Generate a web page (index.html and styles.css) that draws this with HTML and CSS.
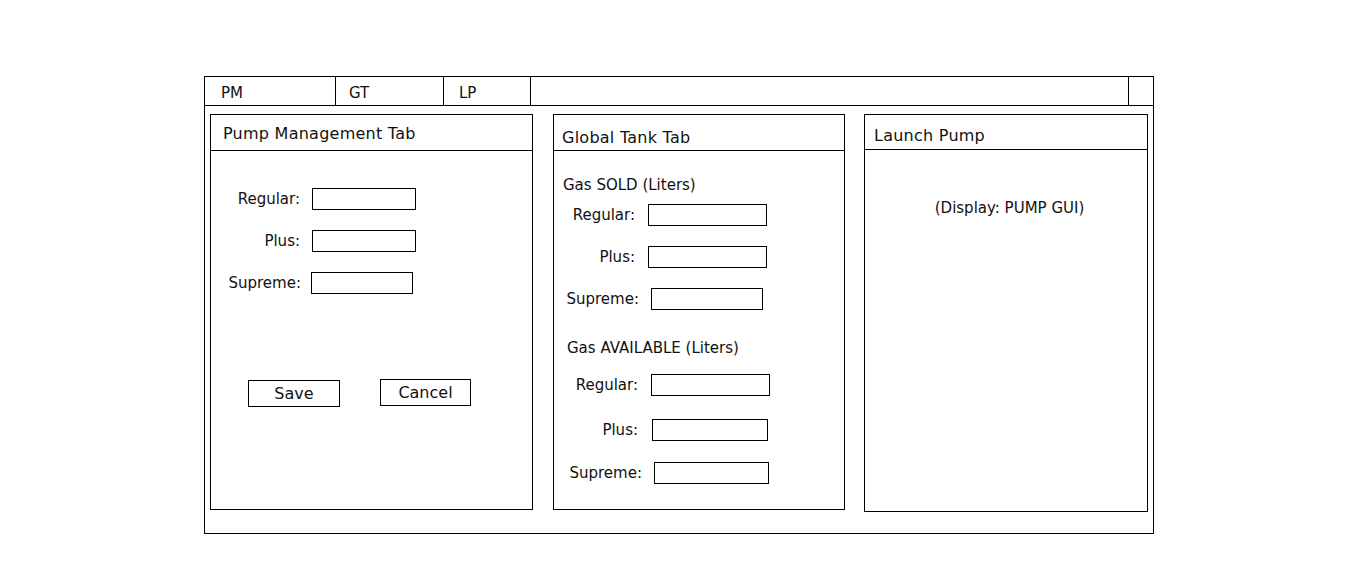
FILE: index.html
```html
<!DOCTYPE html>
<html>
<head>
<meta charset="utf-8">
<title>Pump Management</title>
<link rel="stylesheet" href="styles.css">
</head>
<body>
<div class="frame">
  <div class="tabbar">
    <div class="tab tab-pm">PM</div>
    <div class="tab tab-gt">GT</div>
    <div class="tab tab-lp">LP</div>
    <div class="tab tab-fill"></div>
    <div class="tab tab-end"></div>
  </div>
  <div class="content">
    <section class="panel panel-pm">
      <div class="panel-head head-pm">Pump Management Tab</div>
      <div class="panel-body body-pm">
        <div class="row"><span class="lbl">Regular:</span><span class="field"></span></div>
        <div class="row"><span class="lbl">Plus:</span><span class="field"></span></div>
        <div class="row"><span class="lbl lbl-wide">Supreme:</span><span class="field field-sm"></span></div>
        <div class="buttons">
          <span class="btn btn-save">Save</span>
          <span class="btn btn-cancel">Cancel</span>
        </div>
      </div>
    </section>
    <section class="panel panel-gt">
      <div class="panel-head head-gt">Global Tank Tab</div>
      <div class="panel-body body-gt">
        <div class="group-title gt-sold">Gas SOLD (Liters)</div>
        <div class="row row-gt"><span class="lbl">Regular:</span><span class="field"></span></div>
        <div class="row row-gt"><span class="lbl">Plus:</span><span class="field"></span></div>
        <div class="row row-gt row-shift"><span class="lbl">Supreme:</span><span class="field field-s2"></span></div>
        <div class="group-title gt-avail">Gas AVAILABLE (Liters)</div>
        <div class="row row-gt row-av"><span class="lbl">Regular:</span><span class="field"></span></div>
        <div class="row row-gt row-av row-av2"><span class="lbl">Plus:</span><span class="field field-s3"></span></div>
        <div class="row row-gt row-av row-av3"><span class="lbl">Supreme:</span><span class="field field-s4"></span></div>
      </div>
    </section>
    <section class="panel panel-lp">
      <div class="panel-head head-lp">Launch Pump</div>
      <div class="panel-body body-lp">(Display: PUMP GUI)</div>
    </section>
  </div>
</div>
</body>
</html>
```

FILE: styles.css
```css
html, body {
  margin: 0;
  padding: 0;
  background: #fff;
}
body {
  font-family: "DejaVu Sans", "Liberation Sans", sans-serif;
  font-size: 15px;
  color: #111;
}
.frame {
  box-sizing: border-box;
  margin: 76px 0 0 204px;
  width: 950px;
  height: 458px;
  border: 1px solid #000;
  display: flex;
  flex-direction: column;
}
.tabbar {
  display: flex;
  height: 29px;
  box-sizing: border-box;
  border-bottom: 1px solid #000;
}
.tab {
  box-sizing: border-box;
  border-right: 1px solid #000;
  padding-top: 7px;
  line-height: 18px;
}
.tab-pm { width: 131px; padding-left: 16px; }
.tab-gt { width: 108px; padding-left: 13px; }
.tab-lp { width: 87px; padding-left: 15px; }
.tab-fill { flex: 1; }
.tab-end { width: 24px; border-right: none; }

.content {
  display: flex;
  align-items: flex-start;
  padding: 8px 0 0 5px;
}
.panel {
  box-sizing: border-box;
  border: 1px solid #000;
  display: flex;
  flex-direction: column;
}
.panel-pm { width: 323px; height: 396px; }
.panel-gt { width: 292px; height: 396px; margin-left: 20px; }
.panel-lp { width: 284px; height: 398px; margin-left: 19px; }

.panel-head {
  box-sizing: border-box;
  height: 36px;
  border-bottom: 1px solid #000;
  font-size: 16px;
  line-height: 20px;
  letter-spacing: 0.25px;
}
.head-pm { padding: 9px 0 0 12px; }
.head-gt { padding: 13px 0 0 8px; }
.head-lp { padding: 11px 0 0 9px; height: 35px; }

.row {
  display: flex;
  align-items: center;
  height: 22px;
}
.lbl {
  text-align: right;
  white-space: nowrap;
}
.field {
  box-sizing: border-box;
  border: 1px solid #000;
  height: 22px;
}

.body-pm {
  padding: 37px 0 0 0;
  display: flex;
  flex-direction: column;
  gap: 20px;
}
.body-pm .lbl { width: 89px; }
.body-pm .field { width: 104px; margin-left: 12px; }
.body-pm .lbl-wide { width: 90px; }
.body-pm .field-sm { width: 102px; margin-left: 10px; }

.buttons {
  display: flex;
  gap: 40px;
  margin-top: 66px;
  padding-left: 37px;
  align-items: flex-start;
}
.btn {
  box-sizing: border-box;
  border: 1px solid #000;
  height: 27px;
  font-size: 16px;
  line-height: 25px;
  text-align: center;
}
.btn-save { width: 92px; }
.btn-cancel { width: 91px; margin-top: -1px; }

.body-gt {
  display: flex;
  flex-direction: column;
}
.group-title {
  font-size: 15px;
  line-height: 20px;
}
.gt-sold { margin: 24px 0 0 9px; }
.gt-avail { margin: 28px 0 0 13px; }
.row-gt { margin-top: 20px; }
.gt-sold + .row-gt { margin-top: 9px; }
.row-gt .lbl { width: 81px; }
.row-gt .field { width: 119px; margin-left: 13px; }
.row-shift { padding-left: 4px; }
.row-gt .field-s2 { width: 112px; margin-left: 12px; }
.gt-avail + .row-gt { margin-top: 16px; }
.row-av { padding-left: 3px; }
.row-av .field { width: 119px; margin-left: 13px; }
.row-av2 { margin-top: 23px; }
.row-av3 { padding-left: 7px; margin-top: 21px; }
.row-av .field-s3 { width: 116px; margin-left: 14px; }
.row-av .field-s4 { width: 115px; margin-left: 12px; }

.body-lp {
  padding: 48px 0 0 7px;
  text-align: center;
  line-height: 20px;
}
```
